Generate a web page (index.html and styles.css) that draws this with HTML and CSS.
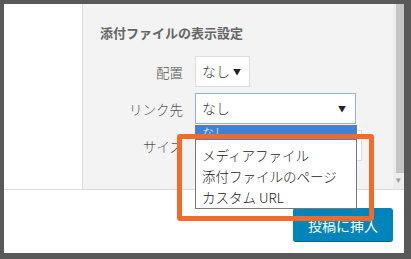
FILE: index.html
```html
<!DOCTYPE html>
<html lang="ja">
<head>
  <meta charset="UTF-8" />
  <title>添付ファイルの表示設定</title>
  <link rel="stylesheet" href="styles.css">
</head>
<body>
  <div class="frame">
    <div class="window">

      <!-- ===== media area + attachment settings sidebar ===== -->
      <div class="main">
        <div class="media-list"></div>

        <div class="sidebar">
          <h2 class="settings-title">添付ファイルの表示設定</h2>
          <div class="settings-form">
            <label class="setting-label">配置</label>
            <div class="fake-select select-align">なし<span class="arrow">▼</span></div>

            <label class="setting-label">リンク先</label>
            <div class="fake-select select-link is-open">なし<span class="arrow">▼</span></div>

            <label class="setting-label">サイズ</label>
            <div class="fake-select select-size"></div>
          </div>
        </div>

        <div class="scrollbar">
          <div class="scroll-thumb"></div>
          <div class="scroll-arrow">▾</div>
        </div>
      </div>

      <!-- ===== bottom toolbar ===== -->
      <div class="toolbar">
        <button class="insert-btn" type="button">投稿に挿入</button>
      </div>

      <!-- open dropdown of the link select -->
      <ul class="dropdown">
        <li class="option is-selected">なし</li>
        <li class="option first">メディアファイル</li>
        <li class="option">添付ファイルのページ</li>
        <li class="option">カスタム URL</li>
      </ul>

      <!-- orange highlight frame -->
      <div class="callout"></div>
    </div>
  </div>
</body>
</html>
```

FILE: styles.css
```css
body {
  margin: 0;
  font-family: "Noto Sans CJK JP", "Liberation Sans", sans-serif;
  font-weight: 300;
}
.frame {
  width: 411px;
  height: 259px;
  box-sizing: border-box;
  padding: 4px 7px 6px 4px;
  background-color: #595959;
}
.window {
  position: relative;
  height: 100%;
  background: #fff;
  display: flex;
  flex-direction: column;
}
.main {
  height: 185px;
  display: grid;
  grid-template-columns: 78px 1fr 11px;
}
.media-list {
  background: #fff;
}
.sidebar {
  background: #f3f3f3;
  border-left: 1px solid #dcdcdc;
  padding: 20px 0 0 17px;
}
.settings-title {
  margin: 0;
  font-size: 13px;
  line-height: 18px;
  font-weight: bold;
  color: #666;
}
.settings-form {
  margin-top: 14px;
  display: grid;
  grid-template-columns: 83px auto;
  column-gap: 12px;
  row-gap: 6px;
  align-items: center;
  justify-items: start;
}
.setting-label {
  justify-self: end;
  font-size: 13.5px;
  color: #555;
}
.fake-select {
  box-sizing: border-box;
  height: 31px;
  line-height: 29px;
  padding-left: 6px;
  font-size: 14px;
  color: #3c3c3c;
  background: #fff;
  border: 1px solid #ddd;
  display: flex;
  justify-content: space-between;
}
.arrow {
  font-size: 8px;
  color: #222;
  padding-right: 9px;
}
.select-align {
  width: 55px;
}
.select-align .arrow {
  padding-right: 8px;
}
.select-link {
  width: 161px;
}
.is-open {
  border-color: #8fb3d6;
}
.select-size {
  width: 167px;
}
.scrollbar {
  background: #ececec;
  position: relative;
}
.scroll-thumb {
  margin-left: 3px;
  height: 169px;
  background: #c4c4c4;
}
.scroll-arrow {
  font-size: 9px;
  line-height: 10px;
  color: #999;
  text-align: center;
  margin-top: 2px;
}
.toolbar {
  flex: 1;
  border-top: 1px solid #dcdcdc;
  display: flex;
  justify-content: flex-end;
  align-items: flex-start;
  padding: 18px 11px 0 0;
}
.insert-btn {
  width: 100px;
  height: 34px;
  border: none;
  border-bottom: 1px solid #006799;
  border-radius: 3px;
  background-color: #0085ba;
  color: #fff;
  font-family: inherit;
  font-size: 14px;
}
.dropdown {
  position: absolute;
  left: 191px;
  top: 121px;
  width: 162px;
  height: 84px;
  box-sizing: border-box;
  margin: 0;
  padding: 0;
  list-style: none;
  background: #fff;
  border: 1px solid #7a7a7a;
  overflow: hidden;
}
.option {
  padding-left: 6px;
  font-size: 13.5px;
  line-height: 21px;
  color: #222;
  white-space: nowrap;
}
.option.is-selected {
  height: 14px;
  line-height: 14px;
  font-size: 12px;
  color: #fff;
  background: #3b82d8;
}
.option.first {
  margin-top: 5px;
}
.callout {
  position: absolute;
  left: 173px;
  top: 130px;
  width: 197px;
  height: 87px;
  box-sizing: border-box;
  border: 5px solid #f26b2b;
  border-radius: 3px;
}
```
